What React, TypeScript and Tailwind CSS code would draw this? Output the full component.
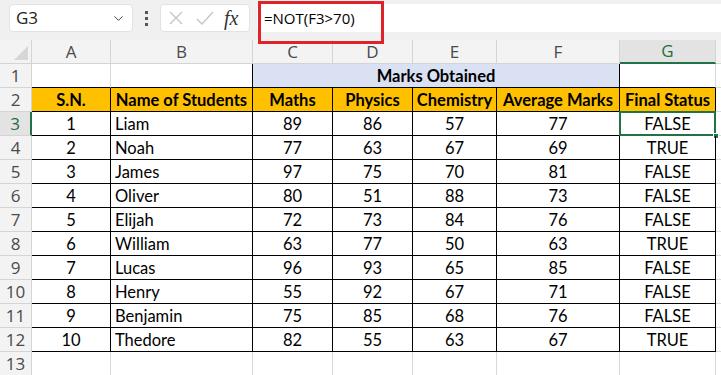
import { ChevronDown } from "lucide-react"

type Row = [number, string, number, number, number, number, string]

const rows: Row[] = [
  [1, "Liam", 89, 86, 57, 77, "FALSE"],
  [2, "Noah", 77, 63, 67, 69, "TRUE"],
  [3, "James", 97, 75, 70, 81, "FALSE"],
  [4, "Oliver", 80, 51, 88, 73, "FALSE"],
  [5, "Elijah", 72, 73, 84, 76, "FALSE"],
  [6, "William", 63, 77, 50, 63, "TRUE"],
  [7, "Lucas", 96, 93, 65, 85, "FALSE"],
  [8, "Henry", 55, 92, 67, 71, "FALSE"],
  [9, "Benjamin", 75, 85, 68, 76, "FALSE"],
  [10, "Thedore", 82, 55, 63, 67, "TRUE"],
]

const cols = ["A", "B", "C", "D", "E", "F", "G"]
const heads = ["S.N.", "Name of Students", "Maths", "Physics", "Chemistry", "Average Marks", "Final Status"]

const rowHead = "flex items-center justify-center border-r border-b border-[#d4d4d4] bg-[#f3f3f3] font-['Open_Sans',sans-serif] text-[17px] text-[#4a4a4a]"
const gridCell = "border-r border-b border-[#dadada]"
const tableCell = "flex items-center pt-[1px] border-r border-b border-black text-[16.5px] text-black"

function FormulaBar() {
  return (
    <div className="flex h-[40px] items-start bg-[#f0f0f0] pt-[4px]">
      <div className="ml-[9px] flex h-[28px] w-[124px] items-center justify-between rounded-[4px] border border-[#e2e2e2] bg-white pl-[6px] pr-[6px] font-['Open_Sans',sans-serif] text-[17px] text-[#222]">
        <span>G3</span>
        <ChevronDown className="h-[15px] w-[15px] text-[#444]" strokeWidth={1.6} />
      </div>
      <div className="ml-[12px] flex h-[28px] flex-col items-center justify-center gap-[3px]">
        <span className="h-[3px] w-[3px] bg-[#555]" />
        <span className="h-[3px] w-[3px] bg-[#555]" />
        <span className="h-[3px] w-[3px] bg-[#555]" />
      </div>
      <div className="ml-[12px] flex h-[28px] w-[90px] items-center rounded-[4px] border border-[#e2e2e2] bg-white pl-[7px]">
        <svg width="16" height="16" viewBox="0 0 16 16" className="text-[#c4c4c4]">
          <path d="M2 2L14 14M14 2L2 14" stroke="currentColor" strokeWidth="1.3" fill="none" />
        </svg>
        <svg width="18" height="16" viewBox="0 0 18 16" className="ml-[12px] text-[#c4c4c4]">
          <path d="M1 9L6 14L17 2" stroke="currentColor" strokeWidth="1.3" fill="none" />
        </svg>
        <span className="ml-[10px] font-['Liberation_Serif',serif] text-[20px] italic leading-none text-[#333]">fx</span>
      </div>
      <div className="ml-[7px] flex h-[28px] flex-1 items-center rounded-l-[4px] bg-white pl-[7px] font-['Open_Sans',sans-serif] text-[15px] text-black">
        =NOT(F3&gt;70)
      </div>
    </div>
  )
}

export default function App() {
  return (
    <div className="relative h-[375px] w-[721px] overflow-hidden bg-white font-['Lato',sans-serif]">
      <FormulaBar />
      <div className="grid grid-cols-[32px_79px_142px_80px_80px_84px_123px_96px_1fr] auto-rows-[24px]">
        {/* column headers */}
        <div className="relative border-r border-b border-[#d4d4d4] bg-[#f3f3f3]">
          <svg width="14" height="14" viewBox="0 0 14 14" className="absolute bottom-[3px] right-[3px]">
            <path d="M14 0V14H0Z" fill="#d6d6d6" />
          </svg>
        </div>
        {cols.map((c) => (
          <div
            key={c}
            className={
              c === "G"
                ? "flex items-center justify-center border-r border-b-2 border-r-[#d4d4d4] border-b-[#217346] bg-[#e3e3e3] font-['Open_Sans',sans-serif] text-[17px] text-[#1e6e42]"
                : "flex items-center justify-center border-r border-b border-[#d4d4d4] bg-[#f3f3f3] font-['Open_Sans',sans-serif] text-[17px] text-[#4a4a4a]"
            }
          >
            {c}
          </div>
        ))}
        <div className="border-b border-[#d4d4d4] bg-[#f3f3f3]" />

        {/* row 1 */}
        <div className={rowHead}>1</div>
        <div className="border-r border-b border-r-[#dadada] border-b-black" />
        <div className="border-r border-b border-black" />
        <div className="col-span-4 flex items-center justify-center border-r border-b border-black bg-[#d9e1f2] pt-[1px] text-[16.5px] font-bold text-black">
          Marks Obtained
        </div>
        <div className="border-r border-b border-r-[#dadada] border-b-black" />
        <div className="border-b border-[#dadada]" />

        {/* row 2 */}
        <div className={rowHead}>2</div>
        {heads.map((h) => (
          <div key={h} className={`${tableCell} justify-center bg-[#ffc000] font-bold`}>
            {h}
          </div>
        ))}
        <div className="border-b border-[#dadada]" />

        {/* data rows */}
        {rows.map((r, i) => {
          const n = i + 3
          const sel = n === 3
          return [
            <div
              key={`h${n}`}
              className={
                sel
                  ? "flex items-center justify-center border-r-2 border-b border-r-[#217346] border-b-[#d4d4d4] bg-[#e3e3e3] font-['Open_Sans',sans-serif] text-[17px] text-[#1e6e42]"
                  : rowHead
              }
            >
              {n}
            </div>,
            <div key={`a${n}`} className={`${tableCell} justify-center`}>{r[0]}</div>,
            <div key={`b${n}`} className={`${tableCell} pl-[4px]`}>{r[1]}</div>,
            <div key={`c${n}`} className={`${tableCell} justify-center`}>{r[2]}</div>,
            <div key={`d${n}`} className={`${tableCell} justify-center`}>{r[3]}</div>,
            <div key={`e${n}`} className={`${tableCell} justify-center`}>{r[4]}</div>,
            <div key={`f${n}`} className={`${tableCell} justify-center`}>{r[5]}</div>,
            <div key={`g${n}`} className={`${tableCell} relative justify-center`}>
              {r[6]}
              {sel && (
                <>
                  <span className="absolute -left-[1px] -top-[1px] h-[25px] w-[97px] border-2 border-[#217346]" />
                  <span className="absolute -bottom-[4px] -right-[4px] h-[6px] w-[6px] border border-white bg-[#217346]" />
                </>
              )}
            </div>,
            <div key={`x${n}`} className="border-b border-[#dadada]" />,
          ]
        })}

        {/* row 13 */}
        <div className={rowHead}>13</div>
        {cols.map((c) => (
          <div key={`e13${c}`} className={gridCell} />
        ))}
        <div />
      </div>

      {/* annotation box around the formula */}
      <div className="absolute left-[258px] top-[1px] h-[43px] w-[126px] border-[3px] border-[#e0232b]" />
    </div>
  )
}
